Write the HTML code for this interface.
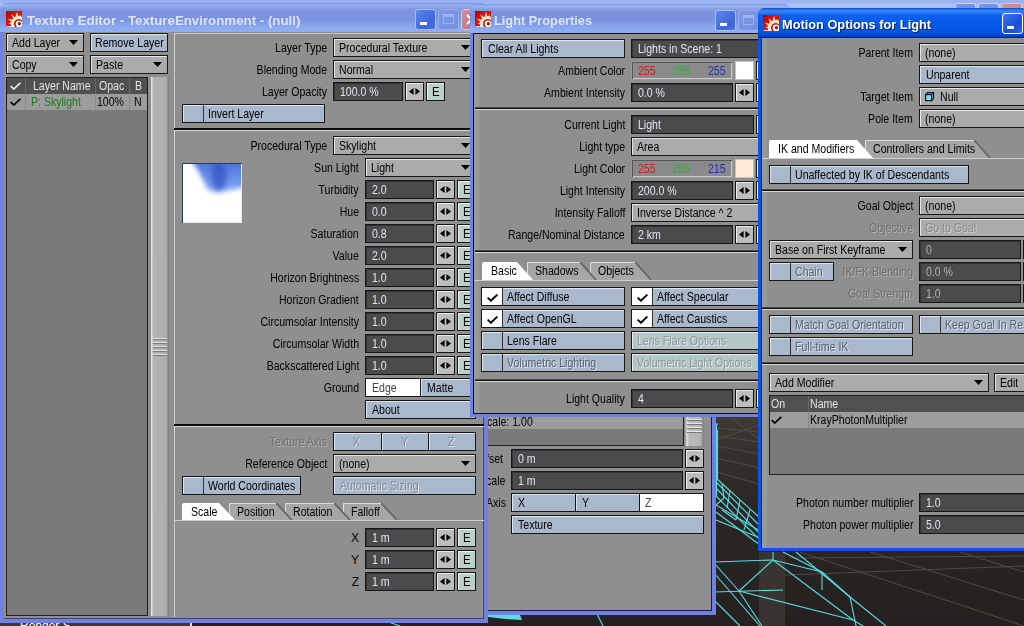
<!DOCTYPE html>
<html><head><meta charset="utf-8"><title>LightWave</title>
<style>
html,body{margin:0;padding:0;}
body{width:1024px;height:626px;position:relative;overflow:hidden;background:#2f2b29;font-family:"Liberation Sans",sans-serif;font-size:12px;}
div,svg,span{position:absolute;}
.win{overflow:hidden;}
.t{white-space:nowrap;line-height:19px;height:19px;}
.w{box-sizing:border-box;border:1px solid #161616;}
.dd{background:#ababab;box-shadow:inset 1px 1px 0 #e6e6e6;}
.fd{background:#4b4b4b;box-shadow:inset 1px 1px 0 #333;}
.ab{background:#bdbdbd;box-shadow:inset 1px 1px 0 #eee;}
.eb{background:#bcd0cc;box-shadow:inset 1px 1px 0 #eef6f4;}
.bb{background:#a9b8cb;box-shadow:inset 1px 1px 0 #dde6f0;}
.gb{background:#b4c6c6;box-shadow:inset 1px 1px 0 #e2eeee;}
.pn{background:#8f8f8f;}
</style></head><body>

<svg class="a" style="left:0;top:0" width="1024" height="626">
<defs><linearGradient id="vg" x1="0" y1="0" x2="0" y2="1"><stop offset="0.66" stop-color="#3d3b34"/><stop offset="0.8" stop-color="#2b2724"/><stop offset="1" stop-color="#252120"/></linearGradient></defs>
<rect x="0" y="0" width="1024" height="626" fill="url(#vg)"/>
<rect x="759" y="552" width="26" height="74" fill="#38342f"/>
<line x1="716" y1="428" x2="760" y2="432" stroke="#4f4b45" stroke-width="1"/>
<line x1="716" y1="436" x2="760" y2="442" stroke="#4f4b45" stroke-width="1"/>
<line x1="716" y1="446" x2="760" y2="454" stroke="#4f4b45" stroke-width="1"/>
<line x1="716" y1="458" x2="760" y2="468" stroke="#4f4b45" stroke-width="1"/>
<line x1="716" y1="472" x2="760" y2="484" stroke="#4f4b45" stroke-width="1"/>
<line x1="716" y1="440" x2="760" y2="425" stroke="#4f4b45" stroke-width="1"/>
<line x1="730" y1="417" x2="760" y2="440" stroke="#4f4b45" stroke-width="1"/>
<line x1="790" y1="558" x2="1024" y2="556" stroke="#4f4b45" stroke-width="1"/>
<line x1="870" y1="552" x2="1024" y2="600" stroke="#4f4b45" stroke-width="1"/>
<line x1="960" y1="552" x2="1024" y2="572" stroke="#4f4b45" stroke-width="1"/>
<line x1="800" y1="552" x2="1024" y2="626" stroke="#4f4b45" stroke-width="1"/>
<line x1="785" y1="575" x2="1024" y2="566" stroke="#4f4b45" stroke-width="1"/>
<line x1="716.5" y1="424" x2="716.5" y2="497" stroke="#5adbe0" stroke-width="1.1"/>
<line x1="717.5" y1="430" x2="717.5" y2="480" stroke="#5adbe0" stroke-width="1.1"/>
<line x1="714" y1="424" x2="718" y2="424" stroke="#5adbe0" stroke-width="1.1"/>
<line x1="716" y1="478" x2="760" y2="518" stroke="#5adbe0" stroke-width="1.1"/>
<line x1="716" y1="482" x2="760" y2="526" stroke="#5adbe0" stroke-width="1.1"/>
<line x1="716" y1="488" x2="760" y2="534" stroke="#5adbe0" stroke-width="1.1"/>
<line x1="716" y1="496" x2="760" y2="540" stroke="#5adbe0" stroke-width="1.1"/>
<line x1="716" y1="505" x2="760" y2="531" stroke="#5adbe0" stroke-width="1.1"/>
<line x1="716" y1="512" x2="760" y2="545" stroke="#5adbe0" stroke-width="1.1"/>
<line x1="716" y1="520" x2="760" y2="538" stroke="#5adbe0" stroke-width="1.1"/>
<line x1="722" y1="484" x2="724" y2="498" stroke="#5adbe0" stroke-width="1.1"/>
<line x1="730" y1="491" x2="727" y2="508" stroke="#5adbe0" stroke-width="1.1"/>
<line x1="740" y1="500" x2="736" y2="520" stroke="#5adbe0" stroke-width="1.1"/>
<line x1="750" y1="510" x2="744" y2="530" stroke="#5adbe0" stroke-width="1.1"/>
<line x1="724" y1="498" x2="716" y2="505" stroke="#5adbe0" stroke-width="1.1"/>
<line x1="736" y1="520" x2="722" y2="510" stroke="#5adbe0" stroke-width="1.1"/>
<line x1="714" y1="562" x2="773" y2="560" stroke="#5adbe0" stroke-width="1.1"/>
<line x1="714" y1="592" x2="783" y2="590" stroke="#5adbe0" stroke-width="1.1"/>
<line x1="714" y1="563" x2="739" y2="591" stroke="#5adbe0" stroke-width="1.1"/>
<line x1="739" y1="591" x2="762" y2="626" stroke="#5adbe0" stroke-width="1.1"/>
<line x1="739" y1="591" x2="773" y2="560" stroke="#5adbe0" stroke-width="1.1"/>
<line x1="773" y1="560" x2="773" y2="552" stroke="#5adbe0" stroke-width="1.1"/>
<line x1="773" y1="560" x2="822" y2="572" stroke="#5adbe0" stroke-width="1.1"/>
<line x1="822" y1="572" x2="850" y2="597" stroke="#5adbe0" stroke-width="1.1"/>
<line x1="850" y1="597" x2="856" y2="626" stroke="#5adbe0" stroke-width="1.1"/>
<line x1="773" y1="560" x2="853" y2="620" stroke="#5adbe0" stroke-width="1.1"/>
<line x1="739" y1="591" x2="853" y2="620" stroke="#5adbe0" stroke-width="1.1"/>
<line x1="783" y1="552" x2="822" y2="572" stroke="#5adbe0" stroke-width="1.1"/>
<line x1="796" y1="552" x2="850" y2="597" stroke="#5adbe0" stroke-width="1.1"/>
<line x1="822" y1="572" x2="822" y2="590" stroke="#5adbe0" stroke-width="1.1"/>
<line x1="714" y1="573" x2="760" y2="626" stroke="#5adbe0" stroke-width="1.1"/>
<line x1="853" y1="620" x2="886" y2="640" stroke="#5adbe0" stroke-width="1.1"/>
<line x1="850" y1="597" x2="886" y2="626" stroke="#5adbe0" stroke-width="1.1"/>
<line x1="714" y1="600" x2="740" y2="626" stroke="#5adbe0" stroke-width="1.1"/>
<line x1="597" y1="614" x2="603" y2="626" stroke="#5adbe0" stroke-width="1.1"/>
<line x1="360" y1="612" x2="400" y2="626" stroke="#5adbe0" stroke-width="1.1"/>
<path d="M488 615H520L522 620L505 619L488 617Z" fill="#5adbe0"/>
</svg>
<div class="a" style="left:0px;top:620px;width:190px;height:6px;background:#3b3a39"></div>
<span class="t" style="left:20px;transform-origin:0 50%;top:617px;color:#fff;font-size:12px;transform:scaleX(1);">Render S</span>
<div class="a" style="left:190px;top:620px;width:2px;height:6px;background:#ddd"></div>
<div class="a" style="left:0px;top:0px;width:1024px;height:9px;background:linear-gradient(#9bb2f0 0,#9bb2f0 3px,#b2c3f3 4px,#a9bcf0 9px)"></div>
<div class="a" style="left:955px;top:3px;width:21px;height:21px;background:linear-gradient(135deg,#7896e6,#6c88dc);border:1px solid #c9d4f4;border-radius:3px;box-sizing:border-box;"></div>
<div class="a" style="left:960px;top:16px;width:7px;height:3px;background:#fff;"></div>
<div class="a" style="left:978px;top:3px;width:21px;height:21px;background:linear-gradient(135deg,#7896e6,#6c88dc);border:1px solid #c9d4f4;border-radius:3px;box-sizing:border-box;"></div>
<div class="a" style="left:983px;top:8px;width:11px;height:10px;border:1px solid #fff;border-top-width:3px;box-sizing:border-box;"></div>
<div class="a" style="left:1001px;top:3px;width:21px;height:21px;background:linear-gradient(135deg,#d8928c,#cc7a76);border:1px solid #d8c4e4;border-radius:3px;box-sizing:border-box;"></div>
<svg class="a" style="left:1006px;top:8px;" width="11" height="11"><path d="M1 1L10 10M10 1L1 10" stroke="#fff" stroke-width="2"/></svg>
<div class="a" style="left:484px;top:380px;width:232px;height:235px;background:#7081e2;"></div>
<div class="a" style="left:488px;top:380px;width:224px;height:231px;background:#1a1a3a"></div>
<div class="a pn" style="left:488px;top:380px;width:223px;height:230px;"></div>
<div class="a" style="left:488px;top:414px;width:196px;height:32px;background:#7a7a7a;border-bottom:1px solid #1c1c1c;border-right:1px solid #1c1c1c;box-sizing:border-box;"></div>
<div class="a" style="left:488px;top:414px;width:195px;height:15px;background:#9c9c9c;"></div>
<span class="t" style="left:487px;transform-origin:0 50%;top:413px;color:#000;font-size:12px;transform:scaleX(0.88);">cale: 1.00</span>
<div class="a" style="left:685px;top:414px;width:19px;height:32px;background:linear-gradient(90deg,#8a8a8a 0,#e4e4e4 2px,#bcbcbc 4px,#b6b6b6 80%,#7c7c7c 100%)"></div>
<div class="a" style="left:687px;top:419px;width:15px;height:1px;background:#e8e8e8"></div>
<div class="a" style="left:687px;top:420px;width:15px;height:1px;background:#777"></div>
<div class="a" style="left:687px;top:423px;width:15px;height:1px;background:#e8e8e8"></div>
<div class="a" style="left:687px;top:424px;width:15px;height:1px;background:#777"></div>
<div class="a" style="left:687px;top:427px;width:15px;height:1px;background:#e8e8e8"></div>
<div class="a" style="left:687px;top:428px;width:15px;height:1px;background:#777"></div>
<div class="a" style="left:687px;top:431px;width:15px;height:1px;background:#e8e8e8"></div>
<div class="a" style="left:687px;top:432px;width:15px;height:1px;background:#777"></div>
<span class="t" style="left:486px;transform-origin:0 50%;top:450px;color:#000;font-size:12px;transform:scaleX(0.88);">fset</span>
<div class="w fd" style="left:511px;top:449px;width:172px;height:19px;"></div>
<span class="t" style="left:518px;transform-origin:0 50%;top:450px;color:#dfe6f5;font-size:12px;transform:scaleX(0.88);">0 m</span>
<div class="w ab" style="left:685px;top:449px;width:19px;height:19px;"></div>
<svg class="a" style="left:689px;top:455px" width="11" height="7" viewBox="0 0 11 7"><path d="M4.6 0V7L0 3.5ZM6.4 0V7L11 3.5Z" fill="#000"/></svg>
<span class="t" style="left:486px;transform-origin:0 50%;top:472px;color:#000;font-size:12px;transform:scaleX(0.88);">cale</span>
<div class="w fd" style="left:511px;top:471px;width:172px;height:19px;"></div>
<span class="t" style="left:518px;transform-origin:0 50%;top:472px;color:#dfe6f5;font-size:12px;transform:scaleX(0.88);">1 m</span>
<div class="w ab" style="left:685px;top:471px;width:19px;height:19px;"></div>
<svg class="a" style="left:689px;top:477px" width="11" height="7" viewBox="0 0 11 7"><path d="M4.6 0V7L0 3.5ZM6.4 0V7L11 3.5Z" fill="#000"/></svg>
<span class="t" style="left:486px;transform-origin:0 50%;top:494px;color:#000;font-size:12px;transform:scaleX(0.88);">Axis</span>
<div class="w bb" style="left:511px;top:493px;width:65px;height:19px;"></div>
<span class="t" style="left:518px;transform-origin:0 50%;top:494px;color:#000;font-size:12px;transform:scaleX(0.88);">X</span>
<div class="w bb" style="left:575px;top:493px;width:65px;height:19px;"></div>
<span class="t" style="left:582px;transform-origin:0 50%;top:494px;color:#000;font-size:12px;transform:scaleX(0.88);">Y</span>
<div class="w" style="left:639px;top:493px;width:65px;height:19px;background:#fff"></div>
<span class="t" style="left:645px;transform-origin:0 50%;top:494px;color:#444;font-size:12px;transform:scaleX(0.88);">Z</span>
<div class="w bb" style="left:511px;top:515px;width:193px;height:19px;"></div>
<span class="t" style="left:518px;transform-origin:0 50%;top:516px;color:#000;font-size:12px;transform:scaleX(0.88);">Texture</span>
<div class="a" style="left:0px;top:3px;width:488px;height:620px;background:#7081e2;border-radius:7px 7px 0 0;"></div>
<div class="a" style="left:0px;top:3px;width:488px;height:29px;background:linear-gradient(#6f88d8 0,#94aeef 1px,#94aeef 3px,#8199e2 6px,#7b92de 10px,#7b92de 16px,#86a4ec 22px,#8eadf1 26px,#8eadf1 100%);border-radius:7px 7px 0 0;"></div>
<svg class="a" style="left:6px;top:11px" width="16" height="16" viewBox="0 0 16 16"><defs><linearGradient id="ig6" x1="0" y1="0" x2="1" y2="1"><stop offset="0" stop-color="#b40000"/><stop offset="0.4" stop-color="#d81408"/><stop offset="1" stop-color="#d01810"/></linearGradient></defs><rect width="16" height="16" fill="url(#ig6)"/><path d="M11 0.8L12.4 5.4L9.6 5.6Z M5.4 3.2L9.3 6.4L7.2 8Z M1.8 7.4L6.2 8.8L5.2 11Z M14.2 3.5L15.8 7.5L13.2 6.6Z M2.4 12.2L5.4 11.6L5.2 13.6Z" fill="#fbe0c4"/><circle cx="12.6" cy="12.8" r="6.2" fill="none" stroke="#fbe6cc" stroke-width="3.2"/><circle cx="12.9" cy="12.9" r="4.3" fill="#a01208"/><circle cx="13" cy="13" r="3.4" fill="#fff"/><circle cx="13.4" cy="12.8" r="1.7" fill="#c01008"/><path d="M0.5 15.2H7V16H0.5Z" fill="#fff"/></svg>
<span class="t" style="left:27px;transform-origin:0 50%;top:11px;color:#dbe4f8;font-size:13px;font-weight:bold;transform:scaleX(1.022);">Texture Editor - TextureEnvironment - (null)</span>
<div class="a" style="left:415px;top:9px;width:21px;height:21px;background:linear-gradient(135deg,#5c88ee,#3e66d8 70%,#4a72e0);border:1px solid #a9bdf2;border-radius:3px;box-sizing:border-box;"></div>
<div class="a" style="left:420px;top:22px;width:7px;height:3px;background:#fff;"></div>
<div class="a" style="left:438px;top:9px;width:21px;height:21px;background:linear-gradient(135deg,#7c98e6,#7490e2);border:1px solid #97adea;border-radius:3px;box-sizing:border-box;"></div>
<div class="a" style="left:443px;top:14px;width:11px;height:10px;border:1px solid #9db2ee;border-top-width:3px;box-sizing:border-box;"></div>
<div class="a" style="left:461px;top:9px;width:21px;height:21px;background:linear-gradient(135deg,#cf8f9a,#bf6c7c);border:1px solid #d8c4e4;border-radius:3px;box-sizing:border-box;"></div>
<svg class="a" style="left:466px;top:14px;" width="11" height="11"><path d="M1 1L10 10M10 1L1 10" stroke="#fff" stroke-width="2"/></svg>
<div class="a" style="left:4px;top:32px;width:480px;height:587px;background:#3c4468"></div>
<div class="a pn" style="left:4px;top:32px;width:479px;height:586px;background:#8f8f8f"></div>
<div class="w dd" style="left:6px;top:33px;width:78px;height:19px;"></div>
<span class="t" style="left:12px;transform-origin:0 50%;top:34px;color:#000;font-size:12px;transform:scaleX(0.88);">Add Layer</span>
<svg class="a" style="left:69px;top:40px" width="9" height="5" viewBox="0 0 9 5"><path d="M0 0H9L4.5 5Z" fill="#000"/></svg>
<div class="w bb" style="left:90px;top:33px;width:78px;height:19px;"></div>
<span class="t" style="left:95px;transform-origin:0 50%;top:34px;color:#000;font-size:12px;transform:scaleX(0.88);">Remove Layer</span>
<div class="w dd" style="left:6px;top:55px;width:78px;height:19px;"></div>
<span class="t" style="left:12px;transform-origin:0 50%;top:56px;color:#000;font-size:12px;transform:scaleX(0.88);">Copy</span>
<svg class="a" style="left:69px;top:62px" width="9" height="5" viewBox="0 0 9 5"><path d="M0 0H9L4.5 5Z" fill="#000"/></svg>
<div class="w dd" style="left:90px;top:55px;width:78px;height:19px;"></div>
<span class="t" style="left:96px;transform-origin:0 50%;top:56px;color:#000;font-size:12px;transform:scaleX(0.88);">Paste</span>
<svg class="a" style="left:153px;top:62px" width="9" height="5" viewBox="0 0 9 5"><path d="M0 0H9L4.5 5Z" fill="#000"/></svg>
<div class="a" style="left:6px;top:77px;width:142px;height:539px;background:#7a7a7a;border:1px solid #1e1e1e;box-sizing:border-box;"></div>
<div class="a" style="left:7px;top:78px;width:140px;height:16px;background:#505050"></div>
<div class="a" style="left:25px;top:78px;width:1px;height:32px;background:#6a6a6a"></div>
<div class="a" style="left:95px;top:78px;width:1px;height:32px;background:#6a6a6a"></div>
<div class="a" style="left:129px;top:78px;width:1px;height:32px;background:#6a6a6a"></div>
<div class="a" style="left:7px;top:94px;width:140px;height:16px;background:#9c9c9c"></div>
<div class="a" style="left:25px;top:94px;width:1px;height:16px;background:#8a8a8a"></div>
<div class="a" style="left:95px;top:94px;width:1px;height:16px;background:#8a8a8a"></div>
<div class="a" style="left:129px;top:94px;width:1px;height:16px;background:#8a8a8a"></div>
<svg class="a" style="left:10px;top:82px" width="11" height="8" viewBox="0 0 11 8"><path d="M0.7 4.2 L3.8 7 L10.3 0.8" fill="none" stroke="#eee" stroke-width="1.7"/></svg>
<svg class="a" style="left:10px;top:98px" width="11" height="8" viewBox="0 0 11 8"><path d="M0.7 4.2 L3.8 7 L10.3 0.8" fill="none" stroke="#000" stroke-width="1.7"/></svg>
<span class="t" style="left:33px;transform-origin:0 50%;top:77px;color:#e4e4e4;font-size:12px;transform:scaleX(0.88);">Layer Name</span>
<span class="t" style="left:99px;transform-origin:0 50%;top:77px;color:#e4e4e4;font-size:12px;transform:scaleX(0.88);">Opac</span>
<span class="t" style="left:135px;transform-origin:0 50%;top:77px;color:#e4e4e4;font-size:12px;transform:scaleX(0.88);">B</span>
<span class="t" style="left:31px;transform-origin:0 50%;top:93px;color:#1f7a1f;font-size:12px;transform:scaleX(0.88);">P: Skylight</span>
<span class="t" style="left:97px;transform-origin:0 50%;top:93px;color:#000;font-size:12px;transform:scaleX(0.88);">100%</span>
<span class="t" style="left:134px;transform-origin:0 50%;top:93px;color:#000;font-size:12px;transform:scaleX(0.88);">N</span>
<div class="a" style="left:151px;top:77px;width:18px;height:539px;background:linear-gradient(90deg,#e2e2e2 0,#e2e2e2 1px,#b4b4b4 2px,#acacac 85%,#777 100%)"></div>
<div class="a" style="left:153px;top:338px;width:14px;height:1px;background:#e4e4e4"></div>
<div class="a" style="left:153px;top:339px;width:14px;height:1px;background:#777"></div>
<div class="a" style="left:153px;top:342px;width:14px;height:1px;background:#e4e4e4"></div>
<div class="a" style="left:153px;top:343px;width:14px;height:1px;background:#777"></div>
<div class="a" style="left:153px;top:346px;width:14px;height:1px;background:#e4e4e4"></div>
<div class="a" style="left:153px;top:347px;width:14px;height:1px;background:#777"></div>
<div class="a" style="left:153px;top:350px;width:14px;height:1px;background:#e4e4e4"></div>
<div class="a" style="left:153px;top:351px;width:14px;height:1px;background:#777"></div>
<div class="a" style="left:153px;top:354px;width:14px;height:1px;background:#e4e4e4"></div>
<div class="a" style="left:153px;top:355px;width:14px;height:1px;background:#777"></div>
<div class="a" style="left:174px;top:33px;width:1px;height:584px;background:#d0d0d0"></div>
<div class="a" style="left:174px;top:33px;width:310px;height:1px;background:#c8c8c8"></div>
<div class="a" style="left:174px;top:128px;width:310px;height:1px;background:#0c0c0c"></div>
<div class="a" style="left:174px;top:129px;width:310px;height:1px;background:#0c0c0c"></div>
<div class="a" style="left:174px;top:130px;width:310px;height:1px;background:#d6d6d6"></div>
<div class="a" style="left:174px;top:424px;width:310px;height:1px;background:#0c0c0c"></div>
<div class="a" style="left:174px;top:425px;width:310px;height:1px;background:#0c0c0c"></div>
<div class="a" style="left:174px;top:426px;width:310px;height:1px;background:#d6d6d6"></div>
<span class="t" style="right:697px;transform-origin:100% 50%;top:39px;color:#000;font-size:12px;transform:scaleX(0.88);">Layer Type</span>
<div class="w dd" style="left:333px;top:38px;width:143px;height:19px;"></div>
<span class="t" style="left:339px;transform-origin:0 50%;top:39px;color:#000;font-size:12px;transform:scaleX(0.88);">Procedural Texture</span>
<svg class="a" style="left:461px;top:45px" width="9" height="5" viewBox="0 0 9 5"><path d="M0 0H9L4.5 5Z" fill="#000"/></svg>
<span class="t" style="right:697px;transform-origin:100% 50%;top:61px;color:#000;font-size:12px;transform:scaleX(0.88);">Blending Mode</span>
<div class="w dd" style="left:333px;top:60px;width:143px;height:19px;"></div>
<span class="t" style="left:339px;transform-origin:0 50%;top:61px;color:#000;font-size:12px;transform:scaleX(0.88);">Normal</span>
<svg class="a" style="left:461px;top:67px" width="9" height="5" viewBox="0 0 9 5"><path d="M0 0H9L4.5 5Z" fill="#000"/></svg>
<span class="t" style="right:697px;transform-origin:100% 50%;top:83px;color:#000;font-size:12px;transform:scaleX(0.88);">Layer Opacity</span>
<div class="w fd" style="left:333px;top:82px;width:70px;height:19px;"></div>
<span class="t" style="left:340px;transform-origin:0 50%;top:83px;color:#dfe6f5;font-size:12px;transform:scaleX(0.88);">100.0 %</span>
<div class="w ab" style="left:405px;top:82px;width:19px;height:19px;"></div>
<svg class="a" style="left:409px;top:88px" width="11" height="7" viewBox="0 0 11 7"><path d="M4.6 0V7L0 3.5ZM6.4 0V7L11 3.5Z" fill="#000"/></svg>
<div class="w eb" style="left:426px;top:82px;width:19px;height:19px;"></div>
<span class="t" style="left:432px;transform-origin:0 50%;top:83px;color:#000;font-size:12px;transform:scaleX(0.95);">E</span>
<div class="w bb" style="left:182px;top:104px;width:143px;height:19px;"></div>
<div class="a" style="left:183px;top:105px;width:20px;height:17px;border-right:1px solid #333;"></div>
<span class="t" style="left:208px;transform-origin:0 50%;top:105px;color:#000;font-size:12px;transform:scaleX(0.88);">Invert Layer</span>
<span class="t" style="right:697px;transform-origin:100% 50%;top:137px;color:#000;font-size:12px;transform:scaleX(0.88);">Procedural Type</span>
<div class="w dd" style="left:333px;top:136px;width:143px;height:19px;"></div>
<span class="t" style="left:339px;transform-origin:0 50%;top:137px;color:#000;font-size:12px;transform:scaleX(0.88);">Skylight</span>
<svg class="a" style="left:461px;top:143px" width="9" height="5" viewBox="0 0 9 5"><path d="M0 0H9L4.5 5Z" fill="#000"/></svg>
<svg class="a" style="left:182px;top:163px" width="60" height="60"><defs><filter id="pb" x="-20%" y="-20%" width="140%" height="140%"><feGaussianBlur stdDeviation="2.4"/></filter><clipPath id="pc"><rect width="60" height="60"/></clipPath><linearGradient id="pg" x1="0" y1="0" x2="0" y2="1"><stop offset="0" stop-color="#4169d8"/><stop offset="1" stop-color="#86acf6"/></linearGradient></defs><rect width="60" height="60" fill="#fff"/><g clip-path="url(#pc)"><g filter="url(#pb)"><polygon points="8,-6 70,-6 70,23 48,27 35,30 26,27 17,9" fill="url(#pg)"/><ellipse cx="37" cy="13" rx="8" ry="15" fill="#3050c4" opacity="0.7"/></g></g><path d="M0.5 60V0.5H60" fill="none" stroke="#2a3a5a"/><path d="M59.5 1V59.5H1" fill="none" stroke="#e8e8e8"/></svg>
<span class="t" style="right:665px;transform-origin:100% 50%;top:159px;color:#000;font-size:12px;transform:scaleX(0.88);">Sun Light</span>
<div class="w dd" style="left:365px;top:158px;width:111px;height:19px;"></div>
<span class="t" style="left:371px;transform-origin:0 50%;top:159px;color:#000;font-size:12px;transform:scaleX(0.88);">Light</span>
<svg class="a" style="left:461px;top:165px" width="9" height="5" viewBox="0 0 9 5"><path d="M0 0H9L4.5 5Z" fill="#000"/></svg>
<span class="t" style="right:665px;transform-origin:100% 50%;top:181px;color:#000;font-size:12px;transform:scaleX(0.88);">Turbidity</span>
<div class="w fd" style="left:365px;top:180px;width:69px;height:19px;"></div>
<span class="t" style="left:372px;transform-origin:0 50%;top:181px;color:#dfe6f5;font-size:12px;transform:scaleX(0.88);">2.0</span>
<div class="w ab" style="left:436px;top:180px;width:19px;height:19px;"></div>
<svg class="a" style="left:440px;top:186px" width="11" height="7" viewBox="0 0 11 7"><path d="M4.6 0V7L0 3.5ZM6.4 0V7L11 3.5Z" fill="#000"/></svg>
<div class="w eb" style="left:457px;top:180px;width:19px;height:19px;"></div>
<span class="t" style="left:463px;transform-origin:0 50%;top:181px;color:#000;font-size:12px;transform:scaleX(0.95);">E</span>
<span class="t" style="right:665px;transform-origin:100% 50%;top:203px;color:#000;font-size:12px;transform:scaleX(0.88);">Hue</span>
<div class="w fd" style="left:365px;top:202px;width:69px;height:19px;"></div>
<span class="t" style="left:372px;transform-origin:0 50%;top:203px;color:#dfe6f5;font-size:12px;transform:scaleX(0.88);">0.0</span>
<div class="w ab" style="left:436px;top:202px;width:19px;height:19px;"></div>
<svg class="a" style="left:440px;top:208px" width="11" height="7" viewBox="0 0 11 7"><path d="M4.6 0V7L0 3.5ZM6.4 0V7L11 3.5Z" fill="#000"/></svg>
<div class="w eb" style="left:457px;top:202px;width:19px;height:19px;"></div>
<span class="t" style="left:463px;transform-origin:0 50%;top:203px;color:#000;font-size:12px;transform:scaleX(0.95);">E</span>
<span class="t" style="right:665px;transform-origin:100% 50%;top:225px;color:#000;font-size:12px;transform:scaleX(0.88);">Saturation</span>
<div class="w fd" style="left:365px;top:224px;width:69px;height:19px;"></div>
<span class="t" style="left:372px;transform-origin:0 50%;top:225px;color:#dfe6f5;font-size:12px;transform:scaleX(0.88);">0.8</span>
<div class="w ab" style="left:436px;top:224px;width:19px;height:19px;"></div>
<svg class="a" style="left:440px;top:230px" width="11" height="7" viewBox="0 0 11 7"><path d="M4.6 0V7L0 3.5ZM6.4 0V7L11 3.5Z" fill="#000"/></svg>
<div class="w eb" style="left:457px;top:224px;width:19px;height:19px;"></div>
<span class="t" style="left:463px;transform-origin:0 50%;top:225px;color:#000;font-size:12px;transform:scaleX(0.95);">E</span>
<span class="t" style="right:665px;transform-origin:100% 50%;top:247px;color:#000;font-size:12px;transform:scaleX(0.88);">Value</span>
<div class="w fd" style="left:365px;top:246px;width:69px;height:19px;"></div>
<span class="t" style="left:372px;transform-origin:0 50%;top:247px;color:#dfe6f5;font-size:12px;transform:scaleX(0.88);">2.0</span>
<div class="w ab" style="left:436px;top:246px;width:19px;height:19px;"></div>
<svg class="a" style="left:440px;top:252px" width="11" height="7" viewBox="0 0 11 7"><path d="M4.6 0V7L0 3.5ZM6.4 0V7L11 3.5Z" fill="#000"/></svg>
<div class="w eb" style="left:457px;top:246px;width:19px;height:19px;"></div>
<span class="t" style="left:463px;transform-origin:0 50%;top:247px;color:#000;font-size:12px;transform:scaleX(0.95);">E</span>
<span class="t" style="right:665px;transform-origin:100% 50%;top:269px;color:#000;font-size:12px;transform:scaleX(0.88);">Horizon Brightness</span>
<div class="w fd" style="left:365px;top:268px;width:69px;height:19px;"></div>
<span class="t" style="left:372px;transform-origin:0 50%;top:269px;color:#dfe6f5;font-size:12px;transform:scaleX(0.88);">1.0</span>
<div class="w ab" style="left:436px;top:268px;width:19px;height:19px;"></div>
<svg class="a" style="left:440px;top:274px" width="11" height="7" viewBox="0 0 11 7"><path d="M4.6 0V7L0 3.5ZM6.4 0V7L11 3.5Z" fill="#000"/></svg>
<div class="w eb" style="left:457px;top:268px;width:19px;height:19px;"></div>
<span class="t" style="left:463px;transform-origin:0 50%;top:269px;color:#000;font-size:12px;transform:scaleX(0.95);">E</span>
<span class="t" style="right:665px;transform-origin:100% 50%;top:291px;color:#000;font-size:12px;transform:scaleX(0.88);">Horizon Gradient</span>
<div class="w fd" style="left:365px;top:290px;width:69px;height:19px;"></div>
<span class="t" style="left:372px;transform-origin:0 50%;top:291px;color:#dfe6f5;font-size:12px;transform:scaleX(0.88);">1.0</span>
<div class="w ab" style="left:436px;top:290px;width:19px;height:19px;"></div>
<svg class="a" style="left:440px;top:296px" width="11" height="7" viewBox="0 0 11 7"><path d="M4.6 0V7L0 3.5ZM6.4 0V7L11 3.5Z" fill="#000"/></svg>
<div class="w eb" style="left:457px;top:290px;width:19px;height:19px;"></div>
<span class="t" style="left:463px;transform-origin:0 50%;top:291px;color:#000;font-size:12px;transform:scaleX(0.95);">E</span>
<span class="t" style="right:665px;transform-origin:100% 50%;top:313px;color:#000;font-size:12px;transform:scaleX(0.88);">Circumsolar Intensity</span>
<div class="w fd" style="left:365px;top:312px;width:69px;height:19px;"></div>
<span class="t" style="left:372px;transform-origin:0 50%;top:313px;color:#dfe6f5;font-size:12px;transform:scaleX(0.88);">1.0</span>
<div class="w ab" style="left:436px;top:312px;width:19px;height:19px;"></div>
<svg class="a" style="left:440px;top:318px" width="11" height="7" viewBox="0 0 11 7"><path d="M4.6 0V7L0 3.5ZM6.4 0V7L11 3.5Z" fill="#000"/></svg>
<div class="w eb" style="left:457px;top:312px;width:19px;height:19px;"></div>
<span class="t" style="left:463px;transform-origin:0 50%;top:313px;color:#000;font-size:12px;transform:scaleX(0.95);">E</span>
<span class="t" style="right:665px;transform-origin:100% 50%;top:335px;color:#000;font-size:12px;transform:scaleX(0.88);">Circumsolar Width</span>
<div class="w fd" style="left:365px;top:334px;width:69px;height:19px;"></div>
<span class="t" style="left:372px;transform-origin:0 50%;top:335px;color:#dfe6f5;font-size:12px;transform:scaleX(0.88);">1.0</span>
<div class="w ab" style="left:436px;top:334px;width:19px;height:19px;"></div>
<svg class="a" style="left:440px;top:340px" width="11" height="7" viewBox="0 0 11 7"><path d="M4.6 0V7L0 3.5ZM6.4 0V7L11 3.5Z" fill="#000"/></svg>
<div class="w eb" style="left:457px;top:334px;width:19px;height:19px;"></div>
<span class="t" style="left:463px;transform-origin:0 50%;top:335px;color:#000;font-size:12px;transform:scaleX(0.95);">E</span>
<span class="t" style="right:665px;transform-origin:100% 50%;top:357px;color:#000;font-size:12px;transform:scaleX(0.88);">Backscattered Light</span>
<div class="w fd" style="left:365px;top:356px;width:69px;height:19px;"></div>
<span class="t" style="left:372px;transform-origin:0 50%;top:357px;color:#dfe6f5;font-size:12px;transform:scaleX(0.88);">1.0</span>
<div class="w ab" style="left:436px;top:356px;width:19px;height:19px;"></div>
<svg class="a" style="left:440px;top:362px" width="11" height="7" viewBox="0 0 11 7"><path d="M4.6 0V7L0 3.5ZM6.4 0V7L11 3.5Z" fill="#000"/></svg>
<div class="w eb" style="left:457px;top:356px;width:19px;height:19px;"></div>
<span class="t" style="left:463px;transform-origin:0 50%;top:357px;color:#000;font-size:12px;transform:scaleX(0.95);">E</span>
<span class="t" style="right:665px;transform-origin:100% 50%;top:379px;color:#000;font-size:12px;transform:scaleX(0.88);">Ground</span>
<div class="w" style="left:365px;top:378px;width:56px;height:19px;background:#fff"></div>
<span class="t" style="left:372px;transform-origin:0 50%;top:379px;color:#444;font-size:12px;transform:scaleX(0.88);">Edge</span>
<div class="w bb" style="left:420px;top:378px;width:56px;height:19px;"></div>
<span class="t" style="left:427px;transform-origin:0 50%;top:379px;color:#000;font-size:12px;transform:scaleX(0.88);">Matte</span>
<div class="w bb" style="left:365px;top:400px;width:111px;height:19px;"></div>
<span class="t" style="left:372px;transform-origin:0 50%;top:401px;color:#000;font-size:12px;transform:scaleX(0.88);">About</span>
<span class="t" style="right:696px;transform-origin:100% 50%;top:434px;color:#b4b4b4;font-size:12px;transform:scaleX(0.88);">Texture Axis</span>
<span class="t" style="right:697px;transform-origin:100% 50%;top:433px;color:#6e6e6e;font-size:12px;transform:scaleX(0.88);">Texture Axis</span>
<div class="w bb" style="left:333px;top:432px;width:49px;height:19px;"></div>
<span class="t" style="left:354px;transform-origin:0 50%;top:434px;color:#dfe6ee;font-size:12px;transform:scaleX(0.88);">X</span>
<span class="t" style="left:353px;transform-origin:0 50%;top:433px;color:#7f8b99;font-size:12px;transform:scaleX(0.88);">X</span>
<div class="w bb" style="left:381px;top:432px;width:48px;height:19px;"></div>
<span class="t" style="left:402px;transform-origin:0 50%;top:434px;color:#dfe6ee;font-size:12px;transform:scaleX(0.88);">Y</span>
<span class="t" style="left:401px;transform-origin:0 50%;top:433px;color:#7f8b99;font-size:12px;transform:scaleX(0.88);">Y</span>
<div class="w bb" style="left:428px;top:432px;width:48px;height:19px;"></div>
<span class="t" style="left:449px;transform-origin:0 50%;top:434px;color:#dfe6ee;font-size:12px;transform:scaleX(0.88);">Z</span>
<span class="t" style="left:448px;transform-origin:0 50%;top:433px;color:#7f8b99;font-size:12px;transform:scaleX(0.88);">Z</span>
<span class="t" style="right:697px;transform-origin:100% 50%;top:455px;color:#000;font-size:12px;transform:scaleX(0.88);">Reference Object</span>
<div class="w dd" style="left:333px;top:454px;width:143px;height:19px;"></div>
<span class="t" style="left:339px;transform-origin:0 50%;top:455px;color:#000;font-size:12px;transform:scaleX(0.88);">(none)</span>
<svg class="a" style="left:461px;top:461px" width="9" height="5" viewBox="0 0 9 5"><path d="M0 0H9L4.5 5Z" fill="#000"/></svg>
<div class="w bb" style="left:182px;top:476px;width:119px;height:19px;"></div>
<div class="a" style="left:183px;top:477px;width:20px;height:17px;border-right:1px solid #333;"></div>
<span class="t" style="left:208px;transform-origin:0 50%;top:477px;color:#000;font-size:12px;transform:scaleX(0.88);">World Coordinates</span>
<div class="w bb" style="left:333px;top:476px;width:143px;height:19px;"></div>
<span class="t" style="left:341px;transform-origin:0 50%;top:478px;color:#dfe6ee;font-size:12px;transform:scaleX(0.88);">Automatic Sizing</span>
<span class="t" style="left:340px;transform-origin:0 50%;top:477px;color:#7f8b99;font-size:12px;transform:scaleX(0.88);">Automatic Sizing</span>
<svg class="a" style="left:343px;top:503px" width="56" height="17"><path d="M0 0H38L54 17H0Z" fill="#a6a6a6"/><path d="M38 0L54 17" fill="none" stroke="#666" stroke-width="1.8"/><path d="M0.5 17V0.5H38" fill="none" stroke="#dcdcdc" stroke-width="1"/></svg>
<span class="t" style="left:351px;transform-origin:0 50%;top:503px;color:#000;font-size:12px;transform:scaleX(0.88);">Falloff</span>
<svg class="a" style="left:285px;top:503px" width="67" height="17"><path d="M0 0H49L65 17H0Z" fill="#a6a6a6"/><path d="M49 0L65 17" fill="none" stroke="#666" stroke-width="1.8"/><path d="M0.5 17V0.5H49" fill="none" stroke="#dcdcdc" stroke-width="1"/></svg>
<span class="t" style="left:293px;transform-origin:0 50%;top:503px;color:#000;font-size:12px;transform:scaleX(0.88);">Rotation</span>
<svg class="a" style="left:229px;top:503px" width="65" height="17"><path d="M0 0H47L63 17H0Z" fill="#a6a6a6"/><path d="M47 0L63 17" fill="none" stroke="#666" stroke-width="1.8"/><path d="M0.5 17V0.5H47" fill="none" stroke="#dcdcdc" stroke-width="1"/></svg>
<span class="t" style="left:237px;transform-origin:0 50%;top:503px;color:#000;font-size:12px;transform:scaleX(0.88);">Position</span>
<svg class="a" style="left:182px;top:503px" width="55" height="17"><path d="M0 17V2Q0 0 2 0H37L53 17Z" fill="#fff"/></svg>
<span class="t" style="left:191px;transform-origin:0 50%;top:503px;color:#000;font-size:12px;transform:scaleX(0.88);">Scale</span>
<div class="a" style="left:174px;top:520px;width:310px;height:1px;background:#d0d0d0"></div>
<span class="t" style="right:665px;transform-origin:100% 50%;top:529px;color:#000;font-size:12px;transform:scaleX(1);">X</span>
<div class="w fd" style="left:365px;top:528px;width:69px;height:19px;"></div>
<span class="t" style="left:372px;transform-origin:0 50%;top:529px;color:#dfe6f5;font-size:12px;transform:scaleX(0.88);">1 m</span>
<div class="w ab" style="left:436px;top:528px;width:19px;height:19px;"></div>
<svg class="a" style="left:440px;top:534px" width="11" height="7" viewBox="0 0 11 7"><path d="M4.6 0V7L0 3.5ZM6.4 0V7L11 3.5Z" fill="#000"/></svg>
<div class="w eb" style="left:457px;top:528px;width:19px;height:19px;"></div>
<span class="t" style="left:463px;transform-origin:0 50%;top:529px;color:#000;font-size:12px;transform:scaleX(0.95);">E</span>
<span class="t" style="right:665px;transform-origin:100% 50%;top:551px;color:#000;font-size:12px;transform:scaleX(1);">Y</span>
<div class="w fd" style="left:365px;top:550px;width:69px;height:19px;"></div>
<span class="t" style="left:372px;transform-origin:0 50%;top:551px;color:#dfe6f5;font-size:12px;transform:scaleX(0.88);">1 m</span>
<div class="w ab" style="left:436px;top:550px;width:19px;height:19px;"></div>
<svg class="a" style="left:440px;top:556px" width="11" height="7" viewBox="0 0 11 7"><path d="M4.6 0V7L0 3.5ZM6.4 0V7L11 3.5Z" fill="#000"/></svg>
<div class="w eb" style="left:457px;top:550px;width:19px;height:19px;"></div>
<span class="t" style="left:463px;transform-origin:0 50%;top:551px;color:#000;font-size:12px;transform:scaleX(0.95);">E</span>
<span class="t" style="right:665px;transform-origin:100% 50%;top:573px;color:#000;font-size:12px;transform:scaleX(1);">Z</span>
<div class="w fd" style="left:365px;top:572px;width:69px;height:19px;"></div>
<span class="t" style="left:372px;transform-origin:0 50%;top:573px;color:#dfe6f5;font-size:12px;transform:scaleX(0.88);">1 m</span>
<div class="w ab" style="left:436px;top:572px;width:19px;height:19px;"></div>
<svg class="a" style="left:440px;top:578px" width="11" height="7" viewBox="0 0 11 7"><path d="M4.6 0V7L0 3.5ZM6.4 0V7L11 3.5Z" fill="#000"/></svg>
<div class="w eb" style="left:457px;top:572px;width:19px;height:19px;"></div>
<span class="t" style="left:463px;transform-origin:0 50%;top:573px;color:#000;font-size:12px;transform:scaleX(0.95);">E</span>
<div class="a" style="left:470px;top:4px;width:320px;height:413px;background:#7081e2;border-radius:7px 7px 0 0;"></div>
<div class="a" style="left:470px;top:4px;width:320px;height:29px;background:linear-gradient(#6f88d8 0,#94aeef 1px,#94aeef 3px,#8199e2 6px,#7b92de 10px,#7b92de 16px,#86a4ec 22px,#8eadf1 26px,#8eadf1 100%);border-radius:7px 7px 0 0;"></div>
<svg class="a" style="left:475px;top:11px" width="16" height="16" viewBox="0 0 16 16"><defs><linearGradient id="ig475" x1="0" y1="0" x2="1" y2="1"><stop offset="0" stop-color="#b40000"/><stop offset="0.4" stop-color="#d81408"/><stop offset="1" stop-color="#d01810"/></linearGradient></defs><rect width="16" height="16" fill="url(#ig475)"/><path d="M11 0.8L12.4 5.4L9.6 5.6Z M5.4 3.2L9.3 6.4L7.2 8Z M1.8 7.4L6.2 8.8L5.2 11Z M14.2 3.5L15.8 7.5L13.2 6.6Z M2.4 12.2L5.4 11.6L5.2 13.6Z" fill="#fbe0c4"/><circle cx="12.6" cy="12.8" r="6.2" fill="none" stroke="#fbe6cc" stroke-width="3.2"/><circle cx="12.9" cy="12.9" r="4.3" fill="#a01208"/><circle cx="13" cy="13" r="3.4" fill="#fff"/><circle cx="13.4" cy="12.8" r="1.7" fill="#c01008"/><path d="M0.5 15.2H7V16H0.5Z" fill="#fff"/></svg>
<span class="t" style="left:494px;transform-origin:0 50%;top:11px;color:#dbe4f8;font-size:13px;font-weight:bold;transform:scaleX(0.983);">Light Properties</span>
<div class="a" style="left:715px;top:10px;width:21px;height:21px;background:linear-gradient(135deg,#5c88ee,#3e66d8 70%,#4a72e0);border:1px solid #a9bdf2;border-radius:3px;box-sizing:border-box;"></div>
<div class="a" style="left:720px;top:23px;width:7px;height:3px;background:#fff;"></div>
<div class="a" style="left:738px;top:10px;width:21px;height:21px;background:linear-gradient(135deg,#7c98e6,#7490e2);border:1px solid #97adea;border-radius:3px;box-sizing:border-box;"></div>
<div class="a" style="left:743px;top:15px;width:11px;height:10px;border:1px solid #9db2ee;border-top-width:3px;box-sizing:border-box;"></div>
<div class="a" style="left:473px;top:33px;width:290px;height:381px;background:#111"></div>
<div class="a pn" style="left:474px;top:34px;width:290px;height:379px;"></div>
<div class="a" style="left:474px;top:34px;width:5px;height:379px;background:#999"></div>
<div class="w bb" style="left:481px;top:39px;width:144px;height:19px;"></div>
<span class="t" style="left:488px;transform-origin:0 50%;top:40px;color:#000;font-size:12px;transform:scaleX(0.88);">Clear All Lights</span>
<div class="w fd" style="left:631px;top:39px;width:130px;height:19px;"></div>
<span class="t" style="left:638px;transform-origin:0 50%;top:40px;color:#dfe6f5;font-size:12px;transform:scaleX(0.88);">Lights in Scene: 1</span>
<span class="t" style="right:399px;transform-origin:100% 50%;top:62px;color:#000;font-size:12px;transform:scaleX(0.88);">Ambient Color</span>
<div class="w" style="left:631px;top:61px;width:102px;height:19px;background:#8a8a8a;box-shadow:inset 1px 1px 0 #555, inset -1px -1px 0 #ccc;border-color:#999"></div>
<span class="t" style="left:638px;transform-origin:0 50%;top:62px;color:#c8202a;font-size:12px;transform:scaleX(0.88);">255</span>
<span class="t" style="left:672px;transform-origin:0 50%;top:62px;color:#2fae3a;font-size:12px;transform:scaleX(0.88);">255</span>
<span class="t" style="left:708px;transform-origin:0 50%;top:62px;color:#2a2fa8;font-size:12px;transform:scaleX(0.88);">255</span>
<div class="w" style="left:735px;top:61px;width:19px;height:19px;background:#fff;border-color:#c4c4c4"></div>
<div class="w ab" style="left:756px;top:61px;width:5px;height:19px;"></div>
<span class="t" style="right:399px;transform-origin:100% 50%;top:84px;color:#000;font-size:12px;transform:scaleX(0.88);">Ambient Intensity</span>
<div class="w fd" style="left:631px;top:83px;width:102px;height:19px;"></div>
<span class="t" style="left:638px;transform-origin:0 50%;top:84px;color:#dfe6f5;font-size:12px;transform:scaleX(0.88);">0.0 %</span>
<div class="w ab" style="left:735px;top:83px;width:19px;height:19px;"></div>
<svg class="a" style="left:739px;top:89px" width="11" height="7" viewBox="0 0 11 7"><path d="M4.6 0V7L0 3.5ZM6.4 0V7L11 3.5Z" fill="#000"/></svg>
<div class="w eb" style="left:756px;top:83px;width:5px;height:19px;"></div>
<div class="a" style="left:475px;top:107px;width:286px;height:1px;background:#4a4a4a"></div>
<div class="a" style="left:475px;top:108px;width:286px;height:1px;background:#0c0c0c"></div>
<div class="a" style="left:475px;top:109px;width:286px;height:1px;background:#d6d6d6"></div>
<span class="t" style="right:399px;transform-origin:100% 50%;top:116px;color:#000;font-size:12px;transform:scaleX(0.88);">Current Light</span>
<div class="w fd" style="left:631px;top:115px;width:123px;height:19px;"></div>
<span class="t" style="left:638px;transform-origin:0 50%;top:116px;color:#dfe6f5;font-size:12px;transform:scaleX(0.88);">Light</span>
<div class="w ab" style="left:756px;top:115px;width:5px;height:19px;"></div>
<span class="t" style="right:399px;transform-origin:100% 50%;top:138px;color:#000;font-size:12px;transform:scaleX(0.88);">Light type</span>
<div class="w dd" style="left:631px;top:137px;width:140px;height:19px;"></div>
<span class="t" style="left:637px;transform-origin:0 50%;top:138px;color:#000;font-size:12px;transform:scaleX(0.88);">Area</span>
<span class="t" style="right:399px;transform-origin:100% 50%;top:160px;color:#000;font-size:12px;transform:scaleX(0.88);">Light Color</span>
<div class="w" style="left:631px;top:159px;width:102px;height:19px;background:#8a8a8a;box-shadow:inset 1px 1px 0 #555, inset -1px -1px 0 #ccc;border-color:#999"></div>
<span class="t" style="left:638px;transform-origin:0 50%;top:160px;color:#c8202a;font-size:12px;transform:scaleX(0.88);">255</span>
<span class="t" style="left:672px;transform-origin:0 50%;top:160px;color:#2fae3a;font-size:12px;transform:scaleX(0.88);">255</span>
<span class="t" style="left:708px;transform-origin:0 50%;top:160px;color:#2a2fa8;font-size:12px;transform:scaleX(0.88);">215</span>
<div class="w" style="left:735px;top:159px;width:19px;height:19px;background:#ffe9d9;border-color:#c4c4c4"></div>
<div class="w ab" style="left:756px;top:159px;width:5px;height:19px;"></div>
<span class="t" style="right:399px;transform-origin:100% 50%;top:182px;color:#000;font-size:12px;transform:scaleX(0.88);">Light Intensity</span>
<div class="w fd" style="left:631px;top:181px;width:102px;height:19px;"></div>
<span class="t" style="left:638px;transform-origin:0 50%;top:182px;color:#dfe6f5;font-size:12px;transform:scaleX(0.88);">200.0 %</span>
<div class="w ab" style="left:735px;top:181px;width:19px;height:19px;"></div>
<svg class="a" style="left:739px;top:187px" width="11" height="7" viewBox="0 0 11 7"><path d="M4.6 0V7L0 3.5ZM6.4 0V7L11 3.5Z" fill="#000"/></svg>
<div class="w eb" style="left:756px;top:181px;width:5px;height:19px;"></div>
<span class="t" style="right:399px;transform-origin:100% 50%;top:204px;color:#000;font-size:12px;transform:scaleX(0.88);">Intensity Falloff</span>
<div class="w dd" style="left:631px;top:203px;width:140px;height:19px;"></div>
<span class="t" style="left:637px;transform-origin:0 50%;top:204px;color:#000;font-size:12px;transform:scaleX(0.88);">Inverse Distance ^ 2</span>
<span class="t" style="right:399px;transform-origin:100% 50%;top:226px;color:#000;font-size:12px;transform:scaleX(0.88);">Range/Nominal Distance</span>
<div class="w fd" style="left:631px;top:225px;width:102px;height:19px;"></div>
<span class="t" style="left:638px;transform-origin:0 50%;top:226px;color:#dfe6f5;font-size:12px;transform:scaleX(0.88);">2 km</span>
<div class="w ab" style="left:735px;top:225px;width:19px;height:19px;"></div>
<svg class="a" style="left:739px;top:231px" width="11" height="7" viewBox="0 0 11 7"><path d="M4.6 0V7L0 3.5ZM6.4 0V7L11 3.5Z" fill="#000"/></svg>
<div class="w eb" style="left:756px;top:225px;width:5px;height:19px;"></div>
<div class="a" style="left:475px;top:250px;width:286px;height:1px;background:#4a4a4a"></div>
<div class="a" style="left:475px;top:251px;width:286px;height:1px;background:#0c0c0c"></div>
<div class="a" style="left:475px;top:252px;width:286px;height:1px;background:#d6d6d6"></div>
<svg class="a" style="left:590px;top:262px" width="63" height="18"><path d="M0 0H45L61 18H0Z" fill="#a6a6a6"/><path d="M45 0L61 18" fill="none" stroke="#666" stroke-width="1.8"/><path d="M0.5 18V0.5H45" fill="none" stroke="#dcdcdc" stroke-width="1"/></svg>
<span class="t" style="left:598px;transform-origin:0 50%;top:262px;color:#000;font-size:12px;transform:scaleX(0.88);">Objects</span>
<svg class="a" style="left:527px;top:262px" width="71" height="18"><path d="M0 0H53L69 18H0Z" fill="#a6a6a6"/><path d="M53 0L69 18" fill="none" stroke="#666" stroke-width="1.8"/><path d="M0.5 18V0.5H53" fill="none" stroke="#dcdcdc" stroke-width="1"/></svg>
<span class="t" style="left:535px;transform-origin:0 50%;top:262px;color:#000;font-size:12px;transform:scaleX(0.88);">Shadows</span>
<svg class="a" style="left:482px;top:262px" width="53" height="18"><path d="M0 18V2Q0 0 2 0H35L51 18Z" fill="#fff"/></svg>
<span class="t" style="left:491px;transform-origin:0 50%;top:262px;color:#000;font-size:12px;transform:scaleX(0.88);">Basic</span>
<div class="a" style="left:474px;top:280px;width:287px;height:1px;background:#d0d0d0"></div>
<div class="w bb" style="left:481px;top:287px;width:144px;height:19px;"></div>
<div class="a" style="left:482px;top:288px;width:20px;height:17px;background:#fff;border-right:1px solid #333;"></div>
<svg class="a" style="left:487px;top:294px" width="11" height="8" viewBox="0 0 11 8"><path d="M0.6 3.6 L3.9 6.8 L10.4 0.6" fill="none" stroke="#000" stroke-width="1.9"/></svg>
<span class="t" style="left:507px;transform-origin:0 50%;top:288px;color:#000;font-size:12px;transform:scaleX(0.88);">Affect Diffuse</span>
<div class="w bb" style="left:631px;top:287px;width:140px;height:19px;"></div>
<div class="a" style="left:632px;top:288px;width:20px;height:17px;background:#fff;border-right:1px solid #333;"></div>
<svg class="a" style="left:637px;top:294px" width="11" height="8" viewBox="0 0 11 8"><path d="M0.6 3.6 L3.9 6.8 L10.4 0.6" fill="none" stroke="#000" stroke-width="1.9"/></svg>
<span class="t" style="left:657px;transform-origin:0 50%;top:288px;color:#000;font-size:12px;transform:scaleX(0.88);">Affect Specular</span>
<div class="w bb" style="left:481px;top:309px;width:144px;height:19px;"></div>
<div class="a" style="left:482px;top:310px;width:20px;height:17px;background:#fff;border-right:1px solid #333;"></div>
<svg class="a" style="left:487px;top:316px" width="11" height="8" viewBox="0 0 11 8"><path d="M0.6 3.6 L3.9 6.8 L10.4 0.6" fill="none" stroke="#000" stroke-width="1.9"/></svg>
<span class="t" style="left:507px;transform-origin:0 50%;top:310px;color:#000;font-size:12px;transform:scaleX(0.88);">Affect OpenGL</span>
<div class="w bb" style="left:631px;top:309px;width:140px;height:19px;"></div>
<div class="a" style="left:632px;top:310px;width:20px;height:17px;background:#fff;border-right:1px solid #333;"></div>
<svg class="a" style="left:637px;top:316px" width="11" height="8" viewBox="0 0 11 8"><path d="M0.6 3.6 L3.9 6.8 L10.4 0.6" fill="none" stroke="#000" stroke-width="1.9"/></svg>
<span class="t" style="left:657px;transform-origin:0 50%;top:310px;color:#000;font-size:12px;transform:scaleX(0.88);">Affect Caustics</span>
<div class="w bb" style="left:481px;top:331px;width:144px;height:19px;"></div>
<div class="a" style="left:482px;top:332px;width:20px;height:17px;border-right:1px solid #333;"></div>
<span class="t" style="left:507px;transform-origin:0 50%;top:332px;color:#000;font-size:12px;transform:scaleX(0.88);">Lens Flare</span>
<div class="w gb" style="left:631px;top:331px;width:140px;height:19px;"></div>
<span class="t" style="left:638px;transform-origin:0 50%;top:333px;color:#dfe6ee;font-size:12px;transform:scaleX(0.88);">Lens Flare Options</span>
<span class="t" style="left:637px;transform-origin:0 50%;top:332px;color:#8a9a9a;font-size:12px;transform:scaleX(0.88);">Lens Flare Options</span>
<div class="w bb" style="left:481px;top:353px;width:144px;height:19px;"></div>
<div class="a" style="left:482px;top:354px;width:20px;height:17px;border-right:1px solid #333;"></div>
<span class="t" style="left:508px;transform-origin:0 50%;top:355px;color:#dfe6ee;font-size:12px;transform:scaleX(0.88);">Volumetric Lighting</span>
<span class="t" style="left:507px;transform-origin:0 50%;top:354px;color:#56616f;font-size:12px;transform:scaleX(0.88);">Volumetric Lighting</span>
<div class="w gb" style="left:631px;top:353px;width:140px;height:19px;"></div>
<span class="t" style="left:638px;transform-origin:0 50%;top:355px;color:#dfe6ee;font-size:12px;transform:scaleX(0.88);">Volumetric Light Options</span>
<span class="t" style="left:637px;transform-origin:0 50%;top:354px;color:#8a9a9a;font-size:12px;transform:scaleX(0.88);">Volumetric Light Options</span>
<div class="a" style="left:475px;top:379px;width:286px;height:1px;background:#4a4a4a"></div>
<div class="a" style="left:475px;top:380px;width:286px;height:1px;background:#0c0c0c"></div>
<div class="a" style="left:475px;top:381px;width:286px;height:1px;background:#d6d6d6"></div>
<span class="t" style="right:399px;transform-origin:100% 50%;top:390px;color:#000;font-size:12px;transform:scaleX(0.88);">Light Quality</span>
<div class="w fd" style="left:631px;top:389px;width:102px;height:19px;"></div>
<span class="t" style="left:638px;transform-origin:0 50%;top:390px;color:#dfe6f5;font-size:12px;transform:scaleX(0.88);">4</span>
<div class="w ab" style="left:735px;top:389px;width:19px;height:19px;"></div>
<svg class="a" style="left:739px;top:395px" width="11" height="7" viewBox="0 0 11 7"><path d="M4.6 0V7L0 3.5ZM6.4 0V7L11 3.5Z" fill="#000"/></svg>
<div class="w eb" style="left:756px;top:389px;width:5px;height:19px;"></div>
<div class="a" style="left:758px;top:8px;width:270px;height:543px;background:#0855e6;border-radius:7px 7px 0 0;"></div>
<div class="a" style="left:758px;top:8px;width:270px;height:30px;background:linear-gradient(#0a48d0 0,#2a7cf8 2px,#3484fb 4px,#0e60ee 7px,#055ae8 50%,#0356e2 80%,#0246c8 93%,#011f80 100%);border-radius:7px 7px 0 0;"></div>
<svg class="a" style="left:763px;top:15px" width="16" height="16" viewBox="0 0 16 16"><defs><linearGradient id="ig763" x1="0" y1="0" x2="1" y2="1"><stop offset="0" stop-color="#b40000"/><stop offset="0.4" stop-color="#d81408"/><stop offset="1" stop-color="#d01810"/></linearGradient></defs><rect width="16" height="16" fill="url(#ig763)"/><path d="M11 0.8L12.4 5.4L9.6 5.6Z M5.4 3.2L9.3 6.4L7.2 8Z M1.8 7.4L6.2 8.8L5.2 11Z M14.2 3.5L15.8 7.5L13.2 6.6Z M2.4 12.2L5.4 11.6L5.2 13.6Z" fill="#fbe0c4"/><circle cx="12.6" cy="12.8" r="6.2" fill="none" stroke="#fbe6cc" stroke-width="3.2"/><circle cx="12.9" cy="12.9" r="4.3" fill="#a01208"/><circle cx="13" cy="13" r="3.4" fill="#fff"/><circle cx="13.4" cy="12.8" r="1.7" fill="#c01008"/><path d="M0.5 15.2H7V16H0.5Z" fill="#fff"/></svg>
<span class="t" style="left:783px;transform-origin:0 50%;top:16px;color:#0a246a;font-size:13px;font-weight:bold;transform:scaleX(0.983);">Motion Options for Light</span>
<span class="t" style="left:782px;transform-origin:0 50%;top:15px;color:#fff;font-size:13px;font-weight:bold;transform:scaleX(0.983);">Motion Options for Light</span>
<div class="a" style="left:1002px;top:13px;width:21px;height:21px;background:linear-gradient(135deg,#3c78f0,#1c50d8 60%,#2a62e6);border:1px solid #fff;border-radius:3px;box-sizing:border-box;"></div>
<div class="a" style="left:1007px;top:26px;width:7px;height:3px;background:#fff;"></div>
<div class="a" style="left:761px;top:37px;width:1px;height:511px;background:#06237a"></div>
<div class="a pn" style="left:762px;top:38px;width:262px;height:510px;"></div>
<div class="a" style="left:762px;top:38px;width:5px;height:510px;background:#999"></div>
<span class="t" style="right:111px;transform-origin:100% 50%;top:44px;color:#000;font-size:12px;transform:scaleX(0.88);">Parent Item</span>
<div class="w dd" style="left:919px;top:43px;width:120px;height:19px;"></div>
<span class="t" style="left:925px;transform-origin:0 50%;top:44px;color:#000;font-size:12px;transform:scaleX(0.88);">(none)</span>
<div class="w bb" style="left:919px;top:65px;width:120px;height:19px;"></div>
<span class="t" style="left:926px;transform-origin:0 50%;top:66px;color:#000;font-size:12px;transform:scaleX(0.88);">Unparent</span>
<span class="t" style="right:111px;transform-origin:100% 50%;top:88px;color:#000;font-size:12px;transform:scaleX(0.88);">Target Item</span>
<div class="w dd" style="left:919px;top:87px;width:120px;height:19px;"></div>
<svg class="a" style="left:925px;top:92px" width="10" height="10" viewBox="0 0 10 10"><path d="M0.6 2.6 L2.6 0.6 H8.6 V6.4 L6.6 8.6 Z" fill="#9aa4a8" stroke="#0a1622" stroke-width="1.1"/><rect x="0.6" y="2.6" width="6" height="6" fill="#7adcf0" stroke="#0a1622" stroke-width="1.2"/><path d="M6.6 2.6 L8.6 0.6" fill="none" stroke="#0a1622" stroke-width="1"/></svg>
<span class="t" style="left:940px;transform-origin:0 50%;top:88px;color:#000;font-size:12px;transform:scaleX(0.88);">Null</span>
<span class="t" style="right:111px;transform-origin:100% 50%;top:110px;color:#000;font-size:12px;transform:scaleX(0.88);">Pole Item</span>
<div class="w dd" style="left:919px;top:109px;width:120px;height:19px;"></div>
<span class="t" style="left:925px;transform-origin:0 50%;top:110px;color:#000;font-size:12px;transform:scaleX(0.88);">(none)</span>
<svg class="a" style="left:865px;top:140px" width="127" height="18"><path d="M0 0H109L125 18H0Z" fill="#a6a6a6"/><path d="M109 0L125 18" fill="none" stroke="#666" stroke-width="1.8"/><path d="M0.5 18V0.5H109" fill="none" stroke="#dcdcdc" stroke-width="1"/></svg>
<span class="t" style="left:873px;transform-origin:0 50%;top:140px;color:#000;font-size:12px;transform:scaleX(0.88);">Controllers and Limits</span>
<svg class="a" style="left:769px;top:140px" width="106" height="18"><path d="M0 18V2Q0 0 2 0H88L104 18Z" fill="#fff"/></svg>
<span class="t" style="left:778px;transform-origin:0 50%;top:140px;color:#000;font-size:12px;transform:scaleX(0.88);">IK and Modifiers</span>
<div class="a" style="left:762px;top:158px;width:262px;height:1px;background:#d0d0d0"></div>
<div class="w bb" style="left:769px;top:165px;width:200px;height:19px;"></div>
<div class="a" style="left:770px;top:166px;width:20px;height:17px;border-right:1px solid #333;"></div>
<span class="t" style="left:795px;transform-origin:0 50%;top:166px;color:#000;font-size:12px;transform:scaleX(0.88);">Unaffected by IK of Descendants</span>
<div class="a" style="left:762px;top:189px;width:262px;height:1px;background:#4a4a4a"></div>
<div class="a" style="left:762px;top:190px;width:262px;height:1px;background:#0c0c0c"></div>
<div class="a" style="left:762px;top:191px;width:262px;height:1px;background:#d6d6d6"></div>
<span class="t" style="right:111px;transform-origin:100% 50%;top:197px;color:#000;font-size:12px;transform:scaleX(0.88);">Goal Object</span>
<div class="w dd" style="left:919px;top:196px;width:120px;height:19px;"></div>
<span class="t" style="left:925px;transform-origin:0 50%;top:197px;color:#000;font-size:12px;transform:scaleX(0.88);">(none)</span>
<span class="t" style="right:110px;transform-origin:100% 50%;top:220px;color:#b4b4b4;font-size:12px;transform:scaleX(0.88);">Objective</span>
<span class="t" style="right:111px;transform-origin:100% 50%;top:219px;color:#6e6e6e;font-size:12px;transform:scaleX(0.88);">Objective</span>
<div class="w dd" style="left:919px;top:218px;width:120px;height:19px;"></div>
<span class="t" style="left:926px;transform-origin:0 50%;top:220px;color:#d0d0d0;font-size:12px;transform:scaleX(0.88);">Go to Goal</span>
<span class="t" style="left:925px;transform-origin:0 50%;top:219px;color:#8a8a8a;font-size:12px;transform:scaleX(0.88);">Go to Goal</span>
<div class="w dd" style="left:769px;top:240px;width:144px;height:19px;"></div>
<span class="t" style="left:775px;transform-origin:0 50%;top:241px;color:#000;font-size:12px;transform:scaleX(0.88);">Base on First Keyframe</span>
<svg class="a" style="left:898px;top:247px" width="9" height="5" viewBox="0 0 9 5"><path d="M0 0H9L4.5 5Z" fill="#000"/></svg>
<div class="w fd" style="left:919px;top:240px;width:102px;height:19px;"></div>
<span class="t" style="left:926px;transform-origin:0 50%;top:241px;color:#aeb2bc;font-size:12px;transform:scaleX(0.88);">0</span>
<div class="w ab" style="left:1023px;top:240px;width:5px;height:19px;"></div>
<div class="w bb" style="left:769px;top:262px;width:65px;height:19px;"></div>
<div class="a" style="left:770px;top:263px;width:20px;height:17px;border-right:1px solid #333;"></div>
<span class="t" style="left:796px;transform-origin:0 50%;top:264px;color:#dfe6ee;font-size:12px;transform:scaleX(0.88);">Chain</span>
<span class="t" style="left:795px;transform-origin:0 50%;top:263px;color:#56616f;font-size:12px;transform:scaleX(0.88);">Chain</span>
<span class="t" style="right:110px;transform-origin:100% 50%;top:264px;color:#b4b4b4;font-size:12px;transform:scaleX(0.88);">IK/FK Blending</span>
<span class="t" style="right:111px;transform-origin:100% 50%;top:263px;color:#6e6e6e;font-size:12px;transform:scaleX(0.88);">IK/FK Blending</span>
<div class="w fd" style="left:919px;top:262px;width:102px;height:19px;"></div>
<span class="t" style="left:926px;transform-origin:0 50%;top:263px;color:#aeb2bc;font-size:12px;transform:scaleX(0.88);">0.0 %</span>
<div class="w ab" style="left:1023px;top:262px;width:5px;height:19px;"></div>
<span class="t" style="right:110px;transform-origin:100% 50%;top:286px;color:#b4b4b4;font-size:12px;transform:scaleX(0.88);">Goal Strength</span>
<span class="t" style="right:111px;transform-origin:100% 50%;top:285px;color:#6e6e6e;font-size:12px;transform:scaleX(0.88);">Goal Strength</span>
<div class="w fd" style="left:919px;top:284px;width:102px;height:19px;"></div>
<span class="t" style="left:926px;transform-origin:0 50%;top:285px;color:#aeb2bc;font-size:12px;transform:scaleX(0.88);">1.0</span>
<div class="w ab" style="left:1023px;top:284px;width:5px;height:19px;"></div>
<div class="a" style="left:762px;top:307px;width:262px;height:1px;background:#4a4a4a"></div>
<div class="a" style="left:762px;top:308px;width:262px;height:1px;background:#0c0c0c"></div>
<div class="a" style="left:762px;top:309px;width:262px;height:1px;background:#d6d6d6"></div>
<div class="w bb" style="left:769px;top:315px;width:144px;height:19px;"></div>
<div class="a" style="left:770px;top:316px;width:20px;height:17px;border-right:1px solid #333;"></div>
<span class="t" style="left:796px;transform-origin:0 50%;top:317px;color:#dfe6ee;font-size:12px;transform:scaleX(0.88);">Match Goal Orientation</span>
<span class="t" style="left:795px;transform-origin:0 50%;top:316px;color:#56616f;font-size:12px;transform:scaleX(0.88);">Match Goal Orientation</span>
<div class="w bb" style="left:919px;top:315px;width:120px;height:19px;"></div>
<div class="a" style="left:920px;top:316px;width:20px;height:17px;border-right:1px solid #333;"></div>
<span class="t" style="left:946px;transform-origin:0 50%;top:317px;color:#dfe6ee;font-size:12px;transform:scaleX(0.88);">Keep Goal In Reach</span>
<span class="t" style="left:945px;transform-origin:0 50%;top:316px;color:#56616f;font-size:12px;transform:scaleX(0.88);">Keep Goal In Reach</span>
<div class="w bb" style="left:769px;top:337px;width:144px;height:19px;"></div>
<div class="a" style="left:770px;top:338px;width:20px;height:17px;border-right:1px solid #333;"></div>
<span class="t" style="left:796px;transform-origin:0 50%;top:339px;color:#dfe6ee;font-size:12px;transform:scaleX(0.88);">Full-time IK</span>
<span class="t" style="left:795px;transform-origin:0 50%;top:338px;color:#56616f;font-size:12px;transform:scaleX(0.88);">Full-time IK</span>
<div class="a" style="left:762px;top:362px;width:262px;height:1px;background:#4a4a4a"></div>
<div class="a" style="left:762px;top:363px;width:262px;height:1px;background:#0c0c0c"></div>
<div class="a" style="left:762px;top:364px;width:262px;height:1px;background:#d6d6d6"></div>
<div class="w dd" style="left:769px;top:373px;width:220px;height:19px;"></div>
<span class="t" style="left:775px;transform-origin:0 50%;top:374px;color:#000;font-size:12px;transform:scaleX(0.88);">Add Modifier</span>
<svg class="a" style="left:974px;top:380px" width="9" height="5" viewBox="0 0 9 5"><path d="M0 0H9L4.5 5Z" fill="#000"/></svg>
<div class="w dd" style="left:994px;top:373px;width:40px;height:19px;"></div>
<span class="t" style="left:1000px;transform-origin:0 50%;top:374px;color:#000;font-size:12px;transform:scaleX(0.88);">Edit</span>
<div class="a" style="left:769px;top:395px;width:260px;height:80px;background:#7a7a7a;border:1px solid #1e1e1e;box-sizing:border-box;"></div>
<div class="a" style="left:770px;top:396px;width:254px;height:16px;background:#505050"></div>
<div class="a" style="left:808px;top:396px;width:1px;height:32px;background:#6a6a6a"></div>
<div class="a" style="left:770px;top:412px;width:254px;height:16px;background:#9c9c9c"></div>
<div class="a" style="left:808px;top:412px;width:1px;height:16px;background:#8a8a8a"></div>
<span class="t" style="left:771px;transform-origin:0 50%;top:395px;color:#e4e4e4;font-size:12px;transform:scaleX(0.88);">On</span>
<span class="t" style="left:810px;transform-origin:0 50%;top:395px;color:#e4e4e4;font-size:12px;transform:scaleX(0.88);">Name</span>
<svg class="a" style="left:771px;top:416px" width="11" height="8" viewBox="0 0 11 8"><path d="M0.7 4.2 L3.8 7 L10.3 0.8" fill="none" stroke="#000" stroke-width="1.7"/></svg>
<span class="t" style="left:810px;transform-origin:0 50%;top:411px;color:#000;font-size:12px;transform:scaleX(0.88);">KrayPhotonMultiplier</span>
<span class="t" style="right:111px;transform-origin:100% 50%;top:494px;color:#000;font-size:12px;transform:scaleX(0.88);">Photon number multiplier</span>
<div class="w fd" style="left:919px;top:493px;width:120px;height:19px;"></div>
<span class="t" style="left:926px;transform-origin:0 50%;top:494px;color:#dfe6f5;font-size:12px;transform:scaleX(0.88);">1.0</span>
<span class="t" style="right:111px;transform-origin:100% 50%;top:516px;color:#000;font-size:12px;transform:scaleX(0.88);">Photon power multiplier</span>
<div class="w fd" style="left:919px;top:515px;width:120px;height:19px;"></div>
<span class="t" style="left:926px;transform-origin:0 50%;top:516px;color:#dfe6f5;font-size:12px;transform:scaleX(0.88);">5.0</span>
</body></html>
